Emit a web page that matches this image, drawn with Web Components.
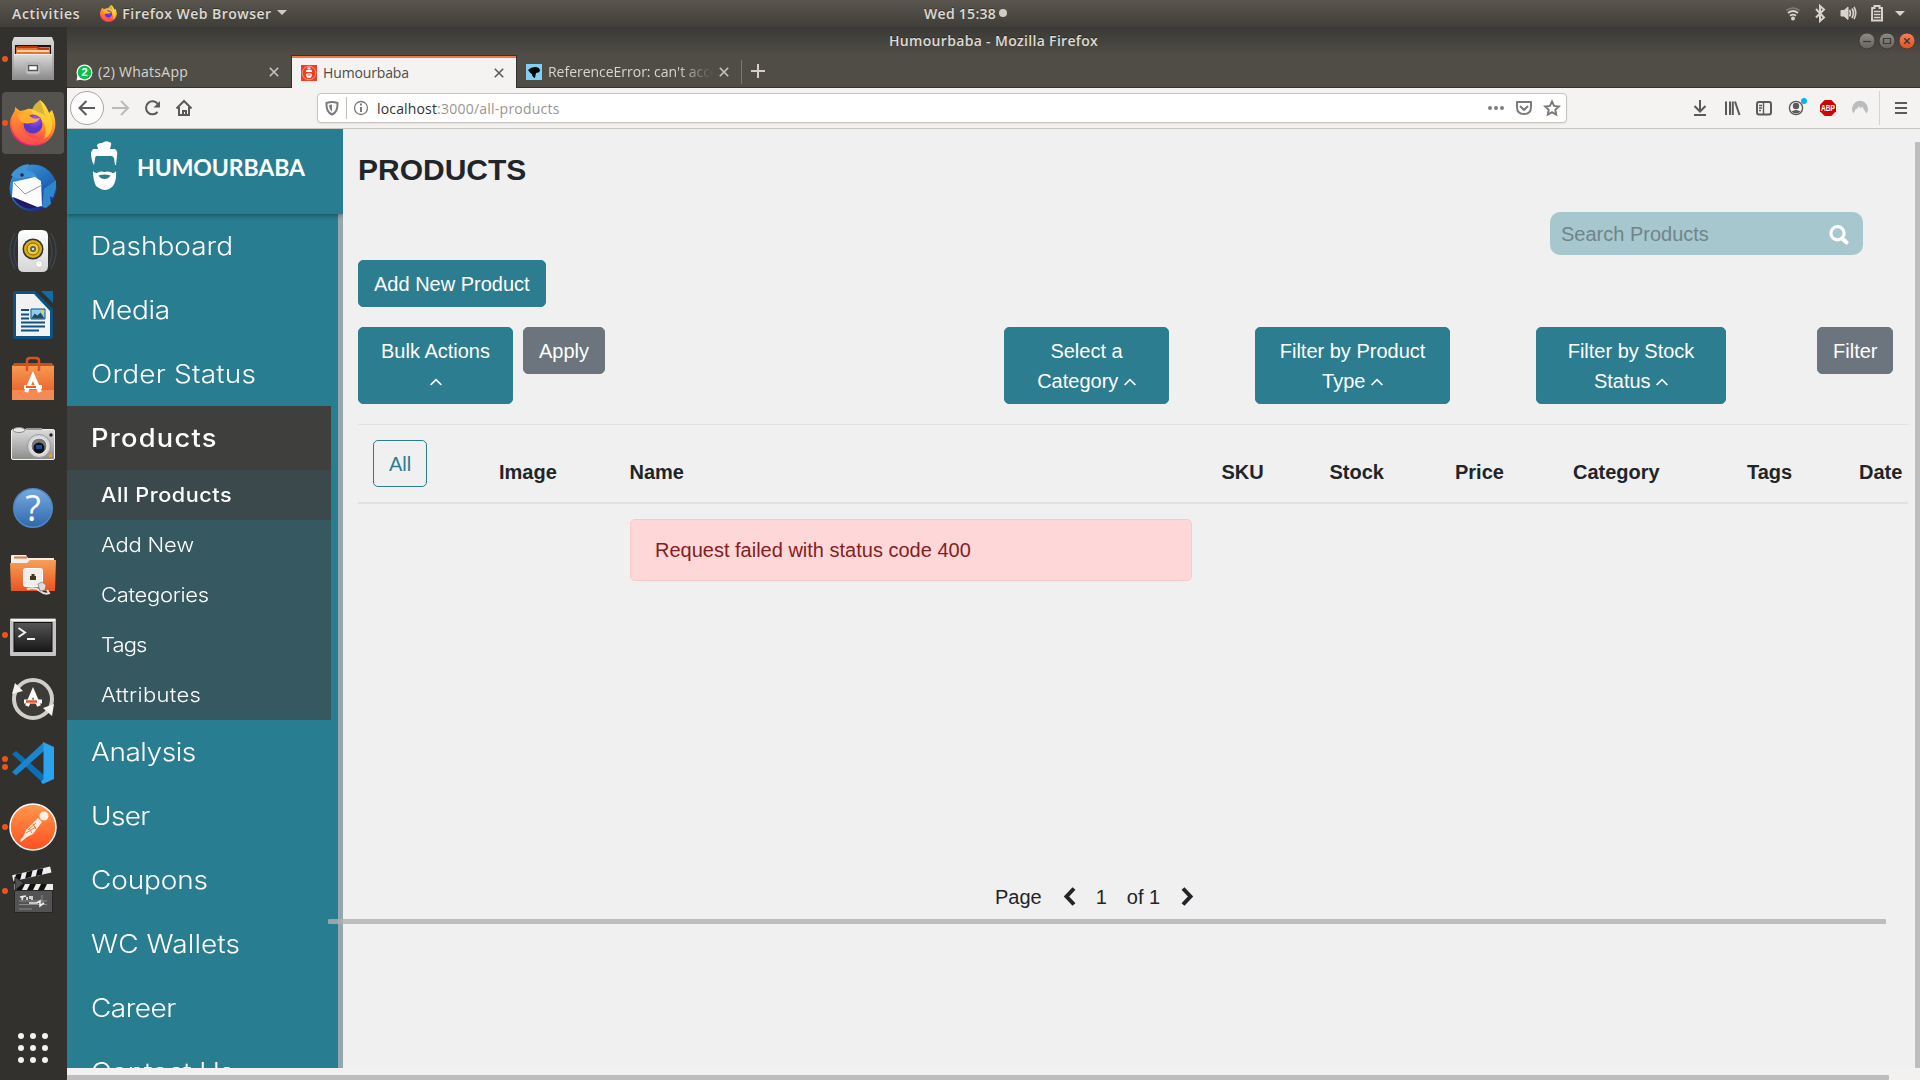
<!DOCTYPE html>
<html lang="en">
<head>
<meta charset="utf-8">
<title>Humourbaba - Mozilla Firefox</title>
<style>
html,body{margin:0;padding:0}
body{width:1920px;height:1080px;overflow:hidden;font-family:"Liberation Sans",Arial,sans-serif;background:#33312d}
</style>
</head>
<body>
<desktop-shell></desktop-shell>
<script>
const define=(name,html)=>customElements.define(name,class extends HTMLElement{
  connectedCallback(){
    if(this.shadowRoot)return;
    const t=document.createElement('template');
    t.innerHTML=html;
    this.attachShadow({mode:'open'}).append(t.content.cloneNode(true));
  }
});
const UI='"Open Sans","Noto Sans",sans-serif';

define('desktop-shell',`<style>
:host{display:flex;flex-direction:column;width:1920px;height:1080px}
.row{display:flex;flex:1;min-height:0}
</style><top-panel></top-panel><div class="row"><app-dock></app-dock><browser-window></browser-window></div>`);

define('top-panel',`<style>
:host{display:flex;height:27px;background:linear-gradient(#5a564e,#403e3a);color:#dfdbd2;font:600 14px/27px ${UI};align-items:center;box-sizing:border-box;text-shadow:0 -1px 0 rgba(0,0,0,.35);padding-bottom:1px}
.l,.r{flex:1;display:flex;align-items:center}
.l{padding-left:12px}.c{display:flex;align-items:center;width:84px}
.r{justify-content:flex-end}
svg{display:block}
.ff{margin:0 5px 0 20px}.tri{margin-left:5px}.dot{width:8px;height:8px;border-radius:50%;background:#d0ccc5;margin-left:3px}
</style>
<div class="l"><ui-text w="68">Activities</ui-text><firefox-logo class="ff" style="--s:17px"></firefox-logo><ui-text w="149">Firefox Web Browser</ui-text>
<svg class="tri" width="10" height="6"><path d="M0 0h10L5 5z" fill="#d0ccc5"/></svg></div>
<div class="c"><ui-text w="72">Wed 15:38</ui-text><span class="dot"></span></div>
<div class="r"><svg width="134" height="27" viewBox="1786 0 134 27" fill="none" stroke="#d8d4cd" stroke-width="1.6">
<path d="M1786.500 10.500q6.500-5 13 0" stroke="#827f79"/><path d="M1788 13q5-4 10 0M1790 15.800q3-2.400 6 0" stroke-width="1.800"/><circle cx="1793" cy="18.500" r="2" fill="#d8d4cd" stroke="none"/>
<path d="M1816 9l8 8.500-4 3.500v-15l4 3.500-8 8" stroke-width="2"/>
<path d="M1841 10.500h3l4-3.500v12.500l-4-3.500h-3z" fill="#d8d4cd" stroke-width="1"/><path d="M1849.500 10q2 3 0 6.500M1852 8.500q2.800 4.700 0 9.500M1854 7q3.500 6 0 12"/>
<path d="M1872.200 8h2.300V6h5v2h2.500v12.500h-10z" stroke-width="2"/><path d="M1874 11.500h6.500M1874 14.500h6.500M1874 17.500h6.500" stroke-width="1.500"/>
<path d="M1895 11h10l-5 5z" fill="#d8d4cd" stroke="none"/></svg></div>`);

define('firefox-logo',`<style>:host{display:block}svg{display:block;width:var(--s,46px);height:var(--s,46px)}</style>
<svg viewBox="0 0 46 46"><defs><linearGradient id="a" x1=".75" y1="0" x2=".35" y2="1"><stop offset="0" stop-color="#fff14a"/><stop offset=".35" stop-color="#ffb22c"/><stop offset=".65" stop-color="#ff6a38"/><stop offset="1" stop-color="#e31577"/></linearGradient>
<radialGradient id="b" cx=".6" cy=".25"><stop offset="0" stop-color="#a55bf8"/><stop offset="1" stop-color="#5b35c8"/></radialGradient>
<linearGradient id="c" x1="0" x2="1" y2="1"><stop offset="0" stop-color="#ff9a2d"/><stop offset="1" stop-color="#ff4d48"/></linearGradient></defs>
<path d="M30 0c5 4 7 8 9 13l3-3c3 7 4 12 3 18C43 39 34 46 23 46 11 46 1 38 0 25c-.5-6 2-10 5-14V7l5 4 5-1c5-3 9 0 13 2 3 1 7 2 8 6z" fill="url(#a)"/>
<path d="M30 0c5 4 7 8 9 13l3 8c1 9-2 15-8 18 3-7 2-13-1-17l-11-9c0-6 3-9 8-13z" fill="#ffd634" opacity=".75"/>
<path d="M2 17c-2 12 3 23 15 27 12 3 22-3 26-11-5 7-17 9-25 2C11 31 10 24 13 18L5 9z" fill="url(#c)" opacity=".65"/>
<circle cx="23" cy="24" r="9.500" fill="url(#b)"/><path d="M7 15c6-3 11-2 14 2 2 2 5 2 9 1-1 3-5 5-10 5-4 1-7 1-10-3z" fill="#ffac2f"/></svg>`);

customElements.define('dock-item',class extends HTMLElement{
  connectedCallback(){
    const n=+this.getAttribute('dots')||0;
    this.attachShadow({mode:'open'}).innerHTML=`<style>
:host{display:flex;height:64px;align-items:center;box-sizing:border-box;padding-left:2px}
.d{width:6px;display:flex;flex-direction:column;gap:2.500px}.d i{width:6px;height:6px;border-radius:50%;background:#e95420}
.b{width:62px;height:62px;border-radius:4px;display:flex;align-items:center;justify-content:center;margin-left:-6px}
.d{position:relative;z-index:1}
:host([active]) .b{background:#55534f}
</style><span class="d">${'<i></i>'.repeat(n)}</span><span class="b"><slot></slot></span>`;
  }
});

const icon=(dots,body)=>`<dock-item dots="${dots}"><svg width="50" height="50" viewBox="8 7 50 50">${body}</svg></dock-item>`;
define('app-dock',`<style>
:host{display:flex;flex-direction:column;width:67px;background:#33312d;box-sizing:border-box}
svg{display:block}.sp{flex:1}.grid{display:grid;grid-template-columns:repeat(3,6px);gap:6px;padding:0 0 17px 18px}.grid i{width:6px;height:6px;border-radius:50%;background:#f2f2f0}
</style>
<svg width="0" height="0" style="position:absolute"><defs>
<linearGradient id="g" x2="0" y2="1"><stop offset="0" stop-color="#dcdcdc"/><stop offset="1" stop-color="#8c8c8c"/></linearGradient>
<linearGradient id="o" x2="0" y2="1"><stop offset="0" stop-color="#f7a057"/><stop offset="1" stop-color="#e95420"/></linearGradient>
<linearGradient id="p" x2="0" y2="1"><stop offset="0" stop-color="#ff9a4a"/><stop offset="1" stop-color="#ff4f20"/></linearGradient>
<linearGradient id="h" x2="0" y2="1"><stop offset="0" stop-color="#78abdd"/><stop offset="1" stop-color="#2e67ad"/></linearGradient>
<linearGradient id="k" x2="0" y2="1"><stop offset="0" stop-color="#555"/><stop offset="1" stop-color="#181818"/></linearGradient>
<linearGradient id="t" x1=".2" x2=".8" y2="1"><stop offset="0" stop-color="#3b97d8"/><stop offset=".6" stop-color="#1d62b4"/><stop offset="1" stop-color="#241a72"/></linearGradient>
<linearGradient id="w" x2="0" y2="1"><stop offset="0" stop-color="#fff"/><stop offset="1" stop-color="#d5d5d5"/></linearGradient></defs></svg>
${icon(1,`<path d="M14 10h38l2 5v38H12V15z" fill="url(#g)"/><path d="M15 18h36v9H15z" fill="#1e1410"/><path d="M16 20h34v7H16z" fill="#e8742c"/><path d="M17 20h20l2 2h10" stroke="#b8370f" stroke-width="2" fill="none"/><path d="M17 24h32" stroke="#fff0de" stroke-width="1.500"/><path d="M14 27h38v25H14z" fill="url(#g)"/><path d="M14 27.500h38" stroke="#f4f4f4"/><rect x="26" y="36" width="14" height="11" rx="2" fill="#c9c9c9" stroke="#aaa"/><rect x="28.500" y="38.500" width="9" height="5" fill="#fff" stroke="#555" stroke-width="1.500"/>`)}
<dock-item dots="1" active><firefox-logo></firefox-logo></dock-item>
${icon(0,`<circle cx="33" cy="33" r="23.500" fill="url(#t)"/><path d="M11 20q6-10 18-11l-3 6q10 2 12 9-8-3-15-1-8 2-12-3" fill="#3f93d6"/><path d="M44 34l12-9v8l-3 10-3-2 1 8-5 4-4-1z" fill="#2e86cd"/><path d="M13 27l22-5 6 4 1 25-5 1-25-10z" fill="#fdfdfd"/><path d="M14 28l11 11 17-9" fill="none" stroke="#8c9bab"/><circle cx="22" cy="20" r="1.800" fill="#2c2a32"/><path d="M13 42l24 10q-8 4-16-1-6-4-8-9" fill="#231a66"/>`)}
${icon(0,`<g fill="none" stroke="#3c4c5f" stroke-width="1.300"><path d="M15 14q-10 18 0 36M51 14q10 18 0 36M17 18q-6 14 0 29M49 18q6 14 0 29" opacity=".8"/></g><path d="M18 17q0-6 6-6h18q6 0 6 6v30q0 6-6 6H24q-6 0-6-6z" fill="url(#w)"/><circle cx="33" cy="30" r="10.500" fill="#333"/><circle cx="33" cy="30" r="9" fill="#d8ae16"/><circle cx="33" cy="30" r="6" fill="#f0cb31" stroke="#806408"/><circle cx="33" cy="30" r="3" fill="#5a5a5a"/><circle cx="33" cy="30" r="1.300" fill="#ddd"/><circle cx="39" cy="45" r="3.500" fill="#fff" stroke="#ccc"/>`)}
${icon(0,`<path d="M41 8h12v12z" fill="#0a6fa9"/><path d="M13 10q0-2 2-2h20l18 18v28q0 2-2 2H15q-2 0-2-2z" fill="#0b5287"/><path d="M16 11h18l16 17v25H16z" fill="#f2f2f2"/><path d="M21 27h8M21 31.500h8M21 35.500h8M21 39.500h24M21 43.500h24M21 47.500h18" stroke="#0b5287" stroke-width="2"/><path d="M31 26h14v10H31z" fill="#8fd0f2" stroke="#0b5287"/><path d="M31.500 35.500l3-5 3 2 3-3 4 6z" fill="#244b62"/><circle cx="43" cy="28.500" r="1.500" fill="#f5c942"/>`)}
${icon(0,`<path d="M12 19l3-3h36l3 3v34H12z" fill="url(#o)"/><path d="M12 19l3-3h36l3 3z" fill="#cc4e20"/><path d="M27 24V14q0-3 3-3h6q3 0 3 3v10" fill="none" stroke="#d9541e" stroke-width="2.500"/><path d="M12 43h42v10H12z" fill="#f68a55"/><path d="M26 45l7-16 7 16" fill="none" stroke="#fff" stroke-width="4"/><path d="M24 40h18" stroke="#fff" stroke-width="4"/><path d="M26 40h10" stroke="#ea5f26" stroke-width="2"/>`)}
${icon(0,`<rect x="11.500" y="18.500" width="43" height="30" rx="1.500" fill="url(#g)" stroke="#f0f0f0"/><ellipse cx="19" cy="19" rx="6" ry="2.500" fill="#e8e8e8" stroke="#888"/><path d="M26 18h16" stroke="#999" stroke-width="2"/><circle cx="39" cy="35" r="11.500" fill="#d8d8d8" stroke="#999"/><circle cx="39" cy="35" r="8" fill="#777" stroke="#f5f5f5"/><circle cx="39" cy="37" r="5.500" fill="#111"/><rect x="36" y="34" width="6" height="4" fill="#1b4c9b"/><circle cx="51" cy="24" r="1.700" fill="#222"/><path d="M49 43h3v3h-3z" fill="#f09a1c"/>`)}
${icon(0,`<circle cx="33" cy="33" r="19.300" fill="url(#h)" stroke="#4f86c4" stroke-width="1.500"/><text x="33" y="46" text-anchor="middle" font-family="Open Sans" font-size="36" font-weight="500" fill="#fff">?</text>`)}
${icon(0,`<path d="M11 17q0-1 1-1h14l2 3h26v8H11z" fill="#f2efec"/><path d="M14 18.500h13" stroke="#e8763a" stroke-width="2"/><path d="M10 24h17l3-3h26l-1 31H11z" fill="url(#o)"/><rect x="23.500" y="29.500" width="19" height="18" rx="2" fill="#f1ede8" stroke="#fff"/><path d="M30 41v-4h1.500v-2h3v2H36v4z" fill="#3c3a20"/><path d="M27 50q9-2 13 2 5 4 9 2l-2-3" fill="none" stroke="#e6e3df" stroke-width="2"/><path d="M38 45l4-2 4 3-1 5-5 1z" fill="#ddd" stroke="#777" stroke-width=".7"/>`)}
${icon(1,`<rect x="10" y="15.500" width="46" height="37.500" rx="1" fill="#c4c4c4"/><path d="M11 17h44" stroke="#f4f4f4" stroke-width="2"/><rect x="14" y="19.500" width="38" height="29" fill="url(#k)" stroke="#111"/><path d="M18.500 25l6.500 4.500-6.500 4.500M27 36h8" fill="none" stroke="#eee" stroke-width="2"/>`)}
${icon(0,`<circle cx="33" cy="32" r="19" fill="#3d3b38" stroke="#cfcfcb" stroke-width="4"/><path d="M12 27l3-11 8 8z" fill="#f2f2f2"/><path d="M54 37l-2 12-9-8z" fill="#f2f2f2"/><path d="M27 39l6-14 6 14" fill="none" stroke="#fff" stroke-width="4"/><path d="M24 34.500h18" stroke="#fff" stroke-width="4"/><path d="M26 34.500h11" stroke="#e95420" stroke-width="2.500"/>`)}
${icon(2,`<path d="M12 23l4-3 28 24v9z" fill="#0a6fb5"/><path d="M12 41l4 3.500L44 20v-9z" fill="#1b86cf"/><path d="M43 11l11 5v32l-11 5-2-2 2.500-3V16z" fill="#2ba3ee"/>`)}
${icon(1,`<circle cx="33" cy="32" r="23" fill="url(#p)" stroke="#fff" stroke-width="1.500"/><circle cx="44" cy="21" r="4.500" fill="#fff0e6"/><path d="M38 23l4 4-9 12-6 3-6 5q-2-2 2-5l3-7z" fill="#fdeee4"/><path d="M28 35l8-7M26 38l10-6M29 33l3 5M33 29l3 5" stroke="#f57736" stroke-width="1"/>`)}
${icon(1,`<g transform="rotate(-13 14 20)"><path d="M13 16h39v6H13z" fill="#eee"/><path d="M17 16h6l-3 6h-6zM28 16h6l-3 6h-6zM39 16h6l-3 6h-6z" fill="#111"/></g><path d="M14 25h39v6H14z" fill="#eee"/><path d="M19 25h6l-3 6h-6zM30 25h6l-3 6h-6zM41 25h6l-3 6h-6z" fill="#111"/><path d="M14.500 31.500h38v22h-38z" fill="#535353" stroke="#252525"/><path d="M15 18l9 6-9 7z" fill="#4f4f4f" stroke="#222"/><path d="M19 42h28M19 45.500h28M19 50h13M42 36v9" stroke="#999" stroke-width=".8"/><path d="M20 38l6-1M23 37l-1 4M27 38v3M30 37v3M32 37v4M29 44h8l3-2v5l4-3" stroke="#eee" stroke-width="1.600" fill="none"/>`)}
<div class="sp"></div><div class="grid"><i></i><i></i><i></i><i></i><i></i><i></i><i></i><i></i><i></i></div>`);

define('browser-window',`<style>
:host{display:flex;flex-direction:column;width:1853px;height:1053px}
</style><title-bar></title-bar><tab-strip></tab-strip><nav-bar></nav-bar><web-page></web-page>`);

define('title-bar',`<style>
:host{display:flex;height:28px;background:linear-gradient(#3a3935,#504d46);color:#dfdbd2;font:600 14px/27px ${UI};justify-content:flex-end;box-sizing:border-box;padding-right:5px}
.t{width:770px;text-shadow:0 -1px 0 rgba(0,0,0,.4)}svg{display:block}
</style><div class="t"><ui-text w="209">Humourbaba - Mozilla Firefox</ui-text></div>
<svg style="margin-left:199px" width="57" height="27" viewBox="1858 27 57 27"><defs><linearGradient id="a" x2="0" y2="1"><stop offset="0" stop-color="#8e8b84"/><stop offset="1" stop-color="#66635d"/></linearGradient><linearGradient id="b" x2="0" y2="1"><stop offset="0" stop-color="#f7805c"/><stop offset="1" stop-color="#e2501d"/></linearGradient></defs>
<g stroke="#35342f" stroke-width=".8"><circle cx="1867" cy="41" r="8" fill="url(#a)"/><circle cx="1887" cy="41" r="8" fill="url(#a)"/><circle cx="1907" cy="41" r="8" fill="url(#b)"/></g>
<g fill="none" stroke="#3b3a36" stroke-width="1.200"><path d="M1863 41.500h8"/><path d="M1883.500 38.500h7v5h-7z"/><path d="M1904.300 38.300l5.400 5.400m0-5.400l-5.400 5.400" stroke-width="1.500"/></g></svg>`);

define('tab-strip',`<style>
:host{display:flex;height:33px;background:#504d46;color:#d8d5ce;font:400 14px/32px ${UI};box-sizing:border-box}
.tab{display:flex;align-items:center;box-sizing:border-box;height:33px;border-bottom:1px solid #33322e;padding-top:2px}
.a{width:224px;padding-left:9px}.b{width:226px;background:#f4f3f2;color:#4e4b46;border:1px solid #33322e;border-bottom:0;box-shadow:inset 0 2px #f0784c;padding:1px 0 0 9px}
.c{width:224px;padding-left:9px}.rest{flex:1}
svg{display:block;flex:none}.x{margin-left:auto;stroke:#c9c5be;stroke-width:1.600;fill:none}
.fade{width:166px;overflow:hidden;-webkit-mask-image:linear-gradient(90deg,#000 78%,transparent 100%);mask-image:linear-gradient(90deg,#000 78%,transparent 100%)}
</style>
<div class="tab a"><svg width="17" height="17"><circle cx="8.500" cy="8.500" r="8" fill="#fff"/><path d="M.5 16.500l1-5 4 4z" fill="#fff"/><circle cx="8.500" cy="8.500" r="6.800" fill="#0bbf4b"/><text x="8.500" y="12.300" text-anchor="middle" fill="#fff" font-size="11" font-weight="700" font-family="Liberation Sans">2</text></svg><ui-text w="90" style="margin-left:5px">(2) WhatsApp</ui-text>
<svg class="x" style="margin-right:12px" width="10" height="10"><path d="M.8.8l8.400 8.400M9.200.8L.8 9.200"/></svg></div>
<div class="tab b"><svg width="16" height="16"><path d="M0 0h16v16H0z" fill="#ee3f24"/><circle cx="8" cy="8" r="6.800" fill="none" stroke="#f9b3a6" stroke-width=".8"/><path d="M5 6q0-1.500 3-1.500T11 6v1H5zM6.500 2.500h3v1.500h-3zM5 9l1.500-.5h3L11 9q0 4-3 4T5 9z" fill="#fff"/><path d="M6.500 10h3" stroke="#ee3f24"/></svg><ui-text w="86" style="margin-left:6px">Humourbaba</ui-text>
<svg class="x" style="margin-right:12px;stroke:#5f5c57" width="10" height="10"><path d="M.8.8l8.400 8.400M9.200.8L.8 9.200"/></svg></div>
<div class="tab c"><svg width="16" height="16"><path d="M0 0h16v16H0z" fill="#83cef3"/><path d="M2 6q3-3 7-3 5 0 5 4-1 2-4 2l-1 5q-3-1-3-4Q4 9 2 6z" fill="#070707"/></svg><div class="fade" style="margin-left:6px"><ui-text w="183">ReferenceError: can't access</ui-text></div>
<svg class="x" style="margin-right:12px" width="10" height="10"><path d="M.8.8l8.400 8.400M9.200.8L.8 9.200"/></svg></div>
<div class="tab rest"><svg width="26" height="24"><path d="M.5 0v24" stroke="#7a7770"/><path d="M10 11h14M17 4v14" stroke="#d4d0c9" stroke-width="2"/></svg></div>`);

define('nav-bar',`<style>
:host{display:flex;height:41px;background:#f4f3f2;border-bottom:1px solid #c9c5c1;box-sizing:border-box;align-items:center;font:400 14px/29px ${UI}}
svg{display:block;flex:none}
.url{display:flex;width:1250px;height:30px;border:1px solid #c8c4bf;border-radius:4px;background:#fff;box-sizing:border-box;align-items:center;box-shadow:0 1px 2px rgba(0,0,0,.08)}
.h{color:#33312e}.p{color:#999590}
</style>
<svg width="250" height="40" viewBox="67 88 250 40" fill="none" stroke="#5b5a58" stroke-width="2">
<circle cx="87" cy="108" r="16.500" fill="#fcfcfc" stroke="#a9a6a2" stroke-width="1"/><path d="M95 108H80M86.500 101l-7 7 7 7"/>
<path d="M112 108h15M121 101l7 7-7 7" stroke="#bcbab7"/>
<path d="M157.500 112a6.500 6.500 0 1 1 .3-8"/><path d="M160 101v6.500h-6.500z" fill="#5b5a58" stroke="none"/>
<path d="M176.500 108.500l7.500-7.500 7.500 7.500M179 107v8h10v-8"/><path d="M183 115v-4h3v4" /></svg>
<div class="url"><svg width="59" height="28" viewBox="318 94 59 28" fill="none" stroke="#7c7b79" stroke-width="2"><path d="M326.500 103q3-1 5.500-1t5.500 1q.5 9-5.500 11.500-6-2.500-5.500-11.500z"/><path d="M332 104.500v7q-3-2-2.800-6.500z" fill="#7c7b79" stroke="none"/><path d="M346.500 97v22" stroke="#c4c1bd" stroke-width="1"/><circle cx="361" cy="108" r="6.500" stroke-width="1.300"/><path d="M361 107v5M361 103.500v2" /></svg>
<ui-text class="h" w="60">localhost</ui-text><ui-text class="p" w="122.500">:3000/all-products</ui-text>
<svg style="margin-left:auto" width="84" height="28" viewBox="1482 94 84 28" fill="none" stroke="#7c7b79" stroke-width="2"><g fill="#7c7b79" stroke="none"><circle cx="1490" cy="108" r="2"/><circle cx="1496" cy="108" r="2"/><circle cx="1502" cy="108" r="2"/></g><path d="M1517 102h14v5q0 7-7 7t-7-7zM1520 106l4 4 4-4" stroke-linejoin="round"/><path d="M1552 101.500l2.100 4.400 4.700.6-3.500 3.300.9 4.800-4.200-2.400-4.200 2.400.9-4.800-3.500-3.300 4.700-.6z"/></svg></div>
<svg style="margin-left:auto" width="230" height="40" viewBox="1690 88 230 40" fill="none" stroke="#5b5a58" stroke-width="2">
<path d="M1700 100v11M1694.500 106l5.500 5.500 5.500-5.500M1694 115h12"/>
<path d="M1726 101.500V115M1730 101.500V115M1732.800 101.500V115M1735 101.500l4.500 13.500"/>
<rect x="1757" y="102" width="14" height="12.500" rx="2"/><path d="M1763.500 102v12M1759 105.500h3M1759 108h3M1759 110.500h2" stroke-width="1.400"/>
<circle cx="1796" cy="108" r="6.600" stroke-width="1.400"/><circle cx="1796" cy="106" r="3.200" fill="#5b5a58" stroke="none"/><path d="M1791.500 111.500q4.500-3 9 0-2 2-4.500 2t-4.500-2z" fill="#5b5a58" stroke="none"/><circle cx="1804" cy="101" r="3" fill="#00b3f4" stroke="none"/>
<path d="M1824.700 100h6.600l4.700 4.700v6.600l-4.700 4.700h-6.600l-4.700-4.700v-6.600z" fill="#cf0606" stroke="none"/><text x="1828" y="111" text-anchor="middle" fill="#fff" stroke="none" font-family="Liberation Sans" font-weight="700" font-size="8.500" textLength="14" lengthAdjust="spacingAndGlyphs">ABP</text>
<path d="M1853.500 113.500a8 8 0 1 1 13 0l-4.500-7-1.500 2-1.500-2.500-2 3-1-.5z" fill="#bbbcc0" stroke="none"/>
<path d="M1879.500 91v34" stroke="#d6d3cf" stroke-width="1"/><path d="M1895 103h12M1895 108h12M1895 113h12"/></svg>`);

define('web-page',`<style>
:host{display:flex;flex:1;min-height:0;position:relative;background:#f0f0f0;overflow:hidden}
.base{position:absolute;left:0;right:0;bottom:0;height:12px;background:#f2f1f0}
.bar{position:absolute;background:#bdbdbd;border-radius:1px}
</style><side-bar></side-bar><products-view></products-view><div class="base"></div>
<div class="bar" style="left:1848px;top:13px;width:5px;height:926px"></div>
<div class="bar" style="left:261px;top:790px;width:1558px;height:5px;background:rgba(176,176,176,.8)"></div>
<div class="bar" style="left:0;top:946px;width:1822px;height:5px"></div>`);

define('side-bar',`<style>
:host{display:flex;flex-direction:column;width:276px;height:939px;background:#297d91;overflow:hidden;color:#fff}
.head{height:85px;flex:none;display:flex;background:#297d91;box-shadow:0 2px 4px rgba(0,0,0,.3);box-sizing:border-box;padding:12px 0 0 24px;z-index:1}
.brand{font:700 23px/28px Lato,sans-serif;margin:12px 0 0 19px;height:28px}
.body{display:flex;flex:1;min-height:0}nav{width:264px;display:flex;flex-direction:column}
.track{width:5px;background:#95a6ae;margin-left:7px}.sub{background:#365860}
</style>
<div class="head"><svg width="27" height="49" viewBox="0 0 27 49" fill="#fff"><path d="M6 4q1-2 5-2 4-3 7-1 3 0 2 3l-1 4H7z"/><path d="M2 8h22q3 2 2 7l-1 9h-1l-1-7q-2-3-5-2l-10 0q-4-1-4 3l-1 6-2-4-1-6q0-4 2-6z"/><path d="M2 30q2 3 5 1.500 3-1.500 6.500-.5 4-1 7 .5Q23 33 25 30q1 9-3 15-4 4-8 4t-9-4Q2 39 2 30z"/><path d="M7.500 34.500q6-2 12 0-2 3.500-6 3.500t-6-3.500z" fill="#297d91"/></svg>
<div class="brand"><ui-text w="168">HUMOURBABA</ui-text></div></div>
<div class="body"><nav>
<menu-item><ui-text sx="1.12" w="142">Dashboard</ui-text></menu-item>
<menu-item><ui-text sx="1.12" w="79">Media</ui-text></menu-item>
<menu-item><ui-text sx="1.12" w="165">Order Status</ui-text></menu-item>
<menu-item active><ui-text sx="1.09" w="126">Products</ui-text></menu-item>
<div class="sub"><menu-item sub active><ui-text sx="1.08" w="131">All Products</ui-text></menu-item>
<menu-item sub><ui-text sx="1.1" w="93">Add New</ui-text></menu-item>
<menu-item sub><ui-text sx="1.1" w="108">Categories</ui-text></menu-item>
<menu-item sub><ui-text sx="1.1" w="46">Tags</ui-text></menu-item>
<menu-item sub><ui-text sx="1.1" w="100">Attributes</ui-text></menu-item></div>
<menu-item><ui-text sx="1.12" w="105">Analysis</ui-text></menu-item>
<menu-item><ui-text sx="1.12" w="59">User</ui-text></menu-item>
<menu-item><ui-text sx="1.12" w="117">Coupons</ui-text></menu-item>
<menu-item><ui-text sx="1.12" w="149">WC Wallets</ui-text></menu-item>
<menu-item><ui-text sx="1.12" w="85">Career</ui-text></menu-item>
<menu-item><ui-text sx="1.12" w="143">Contact Us</ui-text></menu-item>
</nav><div class="track"></div></div>`);

define('menu-item',`<style>
:host{display:block;height:64px;flex:none;font:300 25px/64px Inter,sans-serif;padding-left:24px}
:host([active]){background:#3f403e;font-weight:500}
:host([sub]){height:50px;line-height:50px;font-size:20px;padding-left:34px}
:host([sub][active]){background:#3c494c}
</style><slot></slot>`);

define('ui-button',`<style>
:host{display:block;box-sizing:border-box;font-size:20px;line-height:30px;padding:7.500px 15px;border:1px solid #2c7d90;background:#2c7d90;color:#fff;border-radius:5px;text-align:center;flex:none}
:host([grey]){background:#6c757d;border-color:#6c757d}
:host([outline]){background:none;color:#2c7d90}
</style><slot></slot>`);
define('caret-up',`<style>:host{display:inline-block;height:10px}svg{display:block}</style><svg width="12" height="8"><path d="M.6 7l5.400-5.400L11.400 7" fill="none" stroke="currentColor" stroke-width="1.700"/></svg>`);

define('products-view',`<style>
:host{display:block;width:1550px;padding-left:15px;color:#212529;font-size:20px;line-height:30px}
h1{margin:23px 0 0;font-size:30px;line-height:36px;height:60px}
.search{display:flex;align-items:center;margin-left:1192px;width:313px;height:43px;border-radius:10px;background:#a7c7cf;color:#6f8589;box-sizing:border-box;padding:1px 14px 0 11px;justify-content:space-between}
.search svg{margin-top:2px}
.add{display:flex;margin-top:5px}.filters{display:flex;height:97px;margin-top:20px;align-items:flex-start}
.g{display:grid;grid-template-columns:126px 130.500px 592px 108px 125.500px 118px 174px 112px 64px}
.head{border-top:1px solid #dee2e6;border-bottom:2px solid #dee2e6;height:80px;box-sizing:border-box;align-items:end;font-weight:700;padding-bottom:15px}
.head>*{margin-left:15px}.head ui-button{font-weight:400;justify-self:start}
.alert{grid-column:3;margin:15px;box-sizing:border-box;height:62px;padding:15px 24.500px;border:1px solid #ffc6c6;border-radius:5px;background:#fed8d8;color:#842020}
.pager{display:flex;align-items:center;height:30px;margin:286px 0 0 637px}.pager svg{display:block}
</style>
<h1>PRODUCTS</h1>
<div class="search"><span>Search Products</span><svg width="20" height="20" fill="none" stroke="#fff"><circle cx="8.500" cy="8.300" r="6.600" stroke-width="3.200"/><path d="M13.300 13.500l4.200 4" stroke-width="4" stroke-linecap="round"/></svg></div>
<div class="add"><ui-button>Add New Product</ui-button></div>
<div class="filters"><ui-button style="width:155px">Bulk Actions<br><caret-up></caret-up></ui-button><ui-button grey style="margin-left:10px">Apply</ui-button>
<ui-button style="width:165px;margin-left:399px">Select a<br>Category <caret-up></caret-up></ui-button>
<ui-button style="width:195px;margin-left:86px">Filter by Product<br>Type <caret-up></caret-up></ui-button>
<ui-button style="width:190px;margin-left:86px">Filter by Stock<br>Status <caret-up></caret-up></ui-button>
<ui-button grey style="margin-left:91px">Filter</ui-button></div>
<div class="g head"><ui-button outline>All</ui-button><span>Image</span><span>Name</span><span>SKU</span><span>Stock</span><span>Price</span><span>Category</span><span>Tags</span><span>Date</span></div>
<div class="g"><div class="alert">Request failed with status code 400</div></div>
<div class="pager"><span>Page</span><svg style="margin-left:21px" width="13" height="20" fill="none" stroke="#212529" stroke-width="4"><path d="M11 1.500L3.500 9.500l7.500 8"/></svg><span style="margin-left:20px">1</span><span style="margin-left:20px">of 1</span><svg style="margin-left:21px" width="13" height="20" fill="none" stroke="#212529" stroke-width="4"><path d="M2 1.500l7.500 8-7.500 8"/></svg></div>`);

/* One line of text tracked out or in to a set width, with an optional horizontal stretch. */
customElements.define('ui-text',class extends HTMLElement{
  connectedCallback(){
    this.attachShadow({mode:'open'}).innerHTML='<style>:host{display:inline-block;white-space:nowrap;transform-origin:0 50%}</style><slot></slot>';
    const n=this.textContent.length,sx=+this.getAttribute('sx')||1,w=this.getAttribute('w')/sx;
    this.style.letterSpacing=((w-this.getBoundingClientRect().width)/(n-.5)).toFixed(3)+'px';
    if(sx!==1)this.style.transform='scaleX('+sx+')';
  }
});
</script>
</body>
</html>
